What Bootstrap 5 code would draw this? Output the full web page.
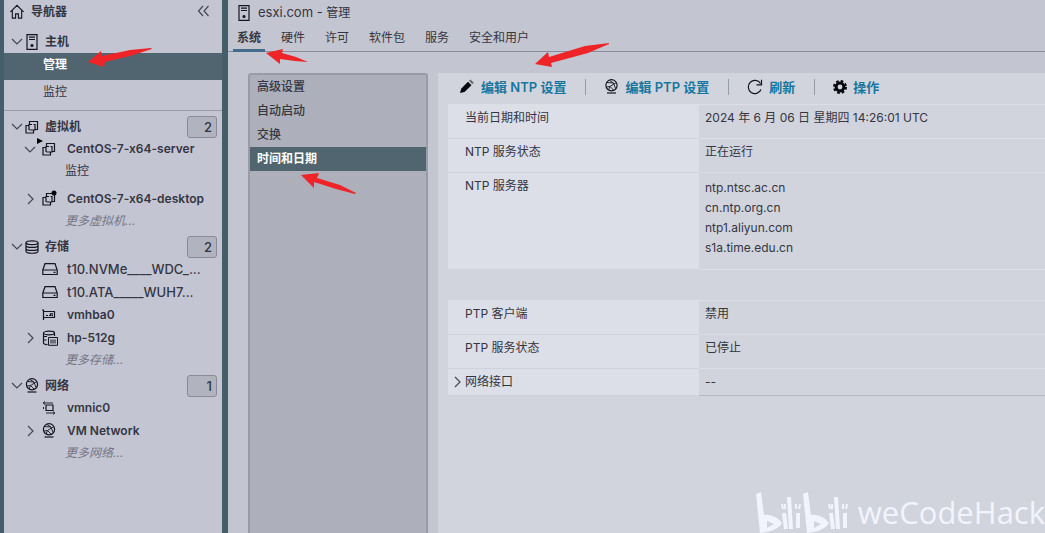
<!DOCTYPE html>
<html lang="zh-CN">
<head>
<meta charset="utf-8">
<meta name="viewport" content="width=device-width, initial-scale=1">
<title>esxi.com - 管理</title>
<link href="https://cdn.jsdelivr.net/npm/bootstrap@5.3.0/dist/css/bootstrap.min.css" rel="stylesheet">
<style>
  body { font: 12px/20px Inter, "Noto Sans CJK SC", sans-serif; color: #343642; background: #455f6a; }
  a { color: inherit; text-decoration: none; }
  svg { flex: none; fill: none; stroke: #14151f; stroke-width: 1.2; }
  .chev { stroke: #454853; stroke-width: 1.2; }
  .sidebar { width: 218px; margin-left: 4px; background: #c4c5d3; flex: none; }
  .content-area { margin-left: 6px; background: #c3c5d0; min-width: 0; }
  .nav-title { height: 23px; padding: 0 12px 0 5px; gap: 6px; font-weight: 600; }
  .tree-row { height: 23px; }
  .tree-root { padding-left: 7px; font-weight: 600; }
  .tree-root .chev { margin-right: 2px; }
  .tree-root a { margin-left: 6px; }
  .tree-item { padding: 0 0 2px 20px; font-weight: 600; }
  .tree-item a { width: 148px; }
  .tree-item.device { font-size: 13px; font-weight: 500; }
  .twist { width: 18px; height: 16px; line-height: 0; flex: none; }
  .twist.closed { padding-left: 3px; }
  .glyph { width: 25px; line-height: 0; flex: none; }
  .tree-sub { padding-left: 61px; }
  .tree-more { height: 20px; padding-left: 61px; font-style: italic; color: #747684; }
  .tree-section { margin-bottom: 4px; }
  .host-section { padding: 7px 0 7px; border-bottom: 1px solid #989aa7; margin-bottom: 4px; }
  .host-link { display: flex; align-items: center; padding-left: 39px; height: 23px; }
  .host-link.active { height: 27px; padding-bottom: 3px; background: #50656f; color: #fff; font-weight: 600; }
  .count-box { width: 30px; height: 22px; margin-right: 5px; padding-right: 4px; border: 1px solid #898c98; border-radius: 3px; background: #b1b3bf; font-size: 13px; text-align: right; font-weight: 500; }
  .page-title { height: 25px; padding-left: 10px; font-size: 13px; }
  .page-title .zh { font-size: 12px; }
  .tab-bar { border-bottom: 1px solid #888b98; padding-left: 5px; gap: 12px; height: 27px; }
  .tab-bar a { padding: 3px 4px 0; height: 27px; }
  .tab-bar a.active { border-bottom: 3px solid #466c8d; font-weight: 700; }
  .work-area { padding: 21px 0 0 20px; gap: 10px; }
  .side-menu { width: 180px; flex: none; border: 2px solid #999ba8; border-bottom: 0; border-radius: 3px 3px 0 0; background: #adb0bb; }
  .side-menu a { display: block; height: 24px; padding: 2px 7px; font-weight: 500; }
  .side-menu a.active { background: #50656f; color: #fff; font-weight: 700; }
  .detail-pane { background: #d1d3dd; padding-left: 10px; min-width: 0; }
  .tool-bar { height: 31px; padding: 0 0 4px 11px; }
  .tool-bar button { display: flex; align-items: center; gap: 6px; border: 0; padding: 0; background: none; color: #16779f; font-size: 13px; font-weight: 600; height: 16px; }
  .tool-bar button + button { border-left: 1px solid #989ba8; margin-left: 19px; padding-left: 18px; }
  .props { width: 100%; margin-bottom: 30px; }
  .props th { width: 251px; padding: 3px 17px; vertical-align: top; font-weight: 400; background: #dcdee8; border-bottom: 1px solid #cfd1dc; }
  .props td { padding: 3px 6px; vertical-align: top; border-bottom: 1px solid #dcdee7; }
  .props tr { height: 34px; }
  .props tr:first-child { border-top: 1px solid #dcdee7; }
  .props tr.last-row { height: 27px; }
  .props tr.last-row td { border-color: #b6b9c4; }
  .props .expand { margin-left: -12px; gap: 3px; }
  .props .servers { padding: 5px 6px 11px; }
  .marks { position: absolute; left: 0; top: 0; pointer-events: none; }
  .marks polygon { fill: #ee2429; stroke: none; }
  .watermark { position: absolute; right: 0; bottom: 0; height: 42px; gap: 8px; color: #f2f4fd; font: 31px/42px "Open Sans", sans-serif; pointer-events: none; }
  .watermark svg { stroke: #f2f4fd; stroke-linejoin: round; }
</style>
</head>
<body>
<svg class="d-none">
  <symbol id="i-home" viewBox="0 0 16 16"><path d="M1 8.500 8 1.500l7 7M3 7v8h3.500v-4.500h3V15H13V7"/></symbol>
  <symbol id="i-host" viewBox="0 0 12 16"><path d="M1 .7h10v14.600H1zM3 3.200h6M3 5.500h6"/><circle cx="6" cy="11.500" r="1" fill="#14151f"/></symbol>
  <symbol id="i-vm" viewBox="0 0 14 14"><path d="M4.500 4V1.500H12.500v8h-2.500M3.500 5.500H1v7.500h7.500V10M4 10V4.500h3M4.500 10H10V4.500H8.500"/></symbol>
  <symbol id="i-disks" viewBox="0 0 14 14"><ellipse cx="7" cy="2.700" rx="6" ry="1.900"/><path d="M1 2.700v8.600c0 2.600 12 2.600 12 0V2.700M1 5.500c0 2.600 12 2.600 12 0M1 8.500c0 2.600 12 2.600 12 0"/></symbol>
  <symbol id="i-drive" viewBox="0 0 16 14"><path d="M.8 8 3 1.700h10L15.200 8v4.500H.8zM.8 8h14.400M11.500 10.400h2"/></symbol>
  <symbol id="i-hba" viewBox="0 0 14 12"><path d="M0 1h1.500v10M1.500 2.500h11v6h-11M4 6.500h2M7 6.500h1.500V4.800H11M9.500 6.700H11"/></symbol>
  <symbol id="i-store" viewBox="0 0 16 16"><ellipse cx="7" cy="3" rx="5.500" ry="1.800"/><path d="M1.500 3v10c0 1 2 1.500 4 1.600M12.500 3v3M2 6.500h3M2 10h2.500"/><path d="M6.500 7.500h9v7.800h-9zM9 9.500v4M11 9.500v4M13 9.500v4" stroke-width="1"/></symbol>
  <symbol id="i-net" viewBox="0 0 14 15"><circle cx="7" cy="6.300" r="5.600"/><path d="M2.500 3.500 9 4l2 5.500M12 3.500 5.500 7.500 4 11M5 1.500l4 2.500M2 8l3.500-.5L9 11" stroke-width=".9"/><path d="M2.500 14h9"/></symbol>
  <symbol id="i-nic" viewBox="0 0 14 14"><path d="M4 4h7v5.500H4z"/><path d="M2 2h9M3 .5 1 2l2 1.500M1.500 6v2M4 12h8M11 10.500l2 1.500-2 1.500" stroke-width=".9"/></symbol>
  <symbol id="i-down" viewBox="0 0 12 8"><path d="m1 1 5 5 5-5"/></symbol>
  <symbol id="i-right" viewBox="0 0 8 12"><path d="m1.500 1 5 5-5 5"/></symbol>
</svg>

<div class="d-flex min-vh-100 position-relative overflow-hidden">
  <nav class="sidebar" aria-label="导航器">
    <div class="nav-title d-flex align-items-center">
      <svg width="16" height="15"><use href="#i-home"/></svg>
      <span>导航器</span>
      <button class="btn p-0 pb-1 border-0 ms-auto lh-1" aria-label="折叠"><svg class="chev" width="13" height="12" viewBox="0 0 13 12"><path d="M6 1 1.500 6 6 11M11.500 1 7 6l4.500 5"/></svg></button>
    </div>
    <div class="host-section">
      <div class="tree-row tree-root d-flex align-items-center">
        <svg class="chev" width="12" height="8"><use href="#i-down"/></svg>
        <svg width="14" height="16"><use href="#i-host"/></svg>
        <a href="#">主机</a>
      </div>
      <a href="#" class="host-link active">管理</a>
      <a href="#" class="host-link">监控</a>
    </div>

    <div class="tree-section">
      <div class="tree-row tree-root d-flex align-items-center">
        <svg class="chev" width="12" height="8"><use href="#i-down"/></svg>
        <svg width="14" height="14"><use href="#i-vm"/></svg>
        <a href="#">虚拟机</a><span class="count-box ms-auto">2</span>
      </div>
      <div class="tree-row tree-item d-flex align-items-center">
        <span class="twist"><svg class="chev" width="12" height="16" viewBox="0 0 12 16"><path d="m1 6 5 5 5-5"/></svg></span>
        <span class="glyph"><svg class="overflow-visible" width="14" height="14" viewBox="0 0 14 14"><use href="#i-vm" width="14" height="14"/><path d="M-5-4v6l6-3z" fill="#000" stroke="none"/></svg></span>
        <a href="#" class="text-truncate">CentOS-7-x64-server</a>
      </div>
      <div class="tree-row tree-sub"><a href="#">监控</a></div>
      <div class="tree-row tree-item d-flex align-items-center mt-1">
        <span class="twist closed"><svg class="chev" width="8" height="16" viewBox="0 0 8 16"><path d="m1 3 5 5-5 5"/></svg></span>
        <span class="glyph"><svg class="overflow-visible" width="14" height="14" viewBox="0 0 14 14"><use href="#i-vm" width="14" height="14"/><circle cx="12" cy="1" r="2.500" fill="#000" stroke="none"/></svg></span>
        <a href="#" class="text-truncate">CentOS-7-x64-desktop</a>
      </div>
      <div class="tree-more"><a href="#">更多虚拟机...</a></div>
    </div>

    <div class="tree-section">
      <div class="tree-row tree-root d-flex align-items-center">
        <svg class="chev" width="12" height="8"><use href="#i-down"/></svg>
        <svg width="14" height="14"><use href="#i-disks"/></svg>
        <a href="#">存储</a><span class="count-box ms-auto">2</span>
      </div>
      <div class="tree-row tree-item device d-flex align-items-center">
        <span class="twist"></span><span class="glyph"><svg width="16" height="14"><use href="#i-drive"/></svg></span>
        <a href="#" class="text-truncate">t10.NVMe____WDC_...</a>
      </div>
      <div class="tree-row tree-item device d-flex align-items-center">
        <span class="twist"></span><span class="glyph"><svg width="16" height="14"><use href="#i-drive"/></svg></span>
        <a href="#" class="text-truncate">t10.ATA_____WUH7...</a>
      </div>
      <div class="tree-row tree-item d-flex align-items-center">
        <span class="twist"></span><span class="glyph"><svg width="14" height="12"><use href="#i-hba"/></svg></span>
        <a href="#" class="text-truncate">vmhba0</a>
      </div>
      <div class="tree-row tree-item d-flex align-items-center">
        <span class="twist closed"><svg class="chev" width="8" height="16" viewBox="0 0 8 16"><path d="m1 3 5 5-5 5"/></svg></span>
        <span class="glyph"><svg width="16" height="16"><use href="#i-store"/></svg></span>
        <a href="#" class="text-truncate">hp-512g</a>
      </div>
      <div class="tree-more"><a href="#">更多存储...</a></div>
    </div>

    <div class="tree-section">
      <div class="tree-row tree-root d-flex align-items-center">
        <svg class="chev" width="12" height="8"><use href="#i-down"/></svg>
        <svg width="14" height="15"><use href="#i-net"/></svg>
        <a href="#">网络</a><span class="count-box ms-auto">1</span>
      </div>
      <div class="tree-row tree-item d-flex align-items-center">
        <span class="twist"></span><span class="glyph"><svg width="14" height="14"><use href="#i-nic"/></svg></span>
        <a href="#" class="text-truncate">vmnic0</a>
      </div>
      <div class="tree-row tree-item d-flex align-items-center">
        <span class="twist closed"><svg class="chev" width="8" height="16" viewBox="0 0 8 16"><path d="m1 3 5 5-5 5"/></svg></span>
        <span class="glyph"><svg width="14" height="15"><use href="#i-net"/></svg></span>
        <a href="#" class="text-truncate">VM Network</a>
      </div>
      <div class="tree-more"><a href="#">更多网络...</a></div>
    </div>
  </nav>

  <main class="content-area flex-grow-1 d-flex flex-column">
    <div class="page-title d-flex align-items-center gap-2">
      <svg width="12" height="16"><use href="#i-host"/></svg>
      <span>esxi.com - <span class="zh">管理</span></span>
    </div>
    <nav class="tab-bar d-flex" aria-label="管理">
      <a href="#" class="active">系统</a><a href="#">硬件</a><a href="#">许可</a><a href="#">软件包</a><a href="#">服务</a><a href="#">安全和用户</a>
    </nav>
    <div class="work-area d-flex flex-grow-1">
      <nav class="side-menu" aria-label="系统">
        <a href="#">高级设置</a><a href="#">自动启动</a><a href="#">交换</a><a href="#" class="active">时间和日期</a>
      </nav>
      <section class="detail-pane flex-grow-1">
        <div class="tool-bar d-flex align-items-center">
          <button type="button"><svg width="16" height="15" viewBox="0 0 16 15"><path d="M1 14 2.300 9.500 9 2.800l3.500 3.500L5.500 13z" fill="#08090f" stroke="none"/><path d="m10 1.800 1.500-1.300 3.300 3.200-1.500 1.600z" fill="#666975" stroke="none"/></svg>编辑 NTP 设置</button>
          <button type="button"><svg width="15" height="15"><use href="#i-net"/></svg>编辑 PTP 设置</button>
          <button type="button"><svg width="16" height="16" viewBox="0 0 16 16"><path d="M14 10.500A6.600 6.600 0 1 1 13.500 4.500M14.500.8v5H9.500"/></svg>刷新</button>
          <button type="button"><svg width="14" height="14" viewBox="0 0 14 14"><circle cx="7" cy="7" r="3.900" stroke="#08090f" stroke-width="3"/><circle cx="7" cy="7" r="5.900" stroke="#08090f" stroke-width="2.200" stroke-dasharray="2.600 2.034"/></svg>操作</button>
        </div>
        <table class="props">
          <tbody>
            <tr><th scope="row">当前日期和时间</th><td>2024 年 6 月 06 日 星期四 14:26:01 UTC</td></tr>
            <tr><th scope="row">NTP 服务状态</th><td>正在运行</td></tr>
            <tr><th scope="row">NTP 服务器</th><td class="servers">ntp.ntsc.ac.cn<br>cn.ntp.org.cn<br>ntp1.aliyun.com<br>s1a.time.edu.cn</td></tr>
          </tbody>
        </table>
        <table class="props">
          <tbody>
            <tr><th scope="row">PTP 客户端</th><td>禁用</td></tr>
            <tr><th scope="row">PTP 服务状态</th><td>已停止</td></tr>
            <tr class="last-row"><th scope="row"><div class="expand d-flex align-items-center"><svg class="chev" width="9" height="12"><use href="#i-right"/></svg>网络接口</div></th><td>--</td></tr>
          </tbody>
        </table>
      </section>
    </div>
  </main>

  <svg class="marks" width="620" height="200" viewBox="0 0 620 200" aria-hidden="true">
    <polygon points="88,62 101,51 102,56 130,50 151,48 152,49 130,56 105,62 104,67"/>
    <polygon points="266,53 283,49 282,53 296,57 308,62 295,61 280,59 280,64"/>
    <polygon points="535,64 548,52 549,57 585,46 609,43 609,44 588,53 551,63 552,67"/>
    <polygon points="301,175 319,173 317,178 340,185 356,193 355,194 336,189 314,182 314,188"/>
  </svg>
  <div class="watermark d-flex">
    <svg width="96" height="42" viewBox="0 0 96 42" role="img" aria-label="bilibili">
      <g id="half"><path d="M2 3 7 1l3 23c8-1 14 3 18 8-3 6-12 9-22 10z" fill="#f2f4fd" stroke="none"/><path d="M13 30v7l7-4z" fill="#d1d3dd" stroke="none"/><path d="M35 6l2 32M30 22l2 16M44 22v15" stroke-width="4"/><path d="M28 13l1 5M31 13v5M42 13v5M46 13l-1 5" stroke-width="2"/></g>
      <use href="#half" x="47"/>
    </svg>
    <span>weCodeHack</span>
  </div>
</div>
<script src="https://cdn.jsdelivr.net/npm/bootstrap@5.3.0/dist/js/bootstrap.bundle.min.js"></script>
</body>
</html>
